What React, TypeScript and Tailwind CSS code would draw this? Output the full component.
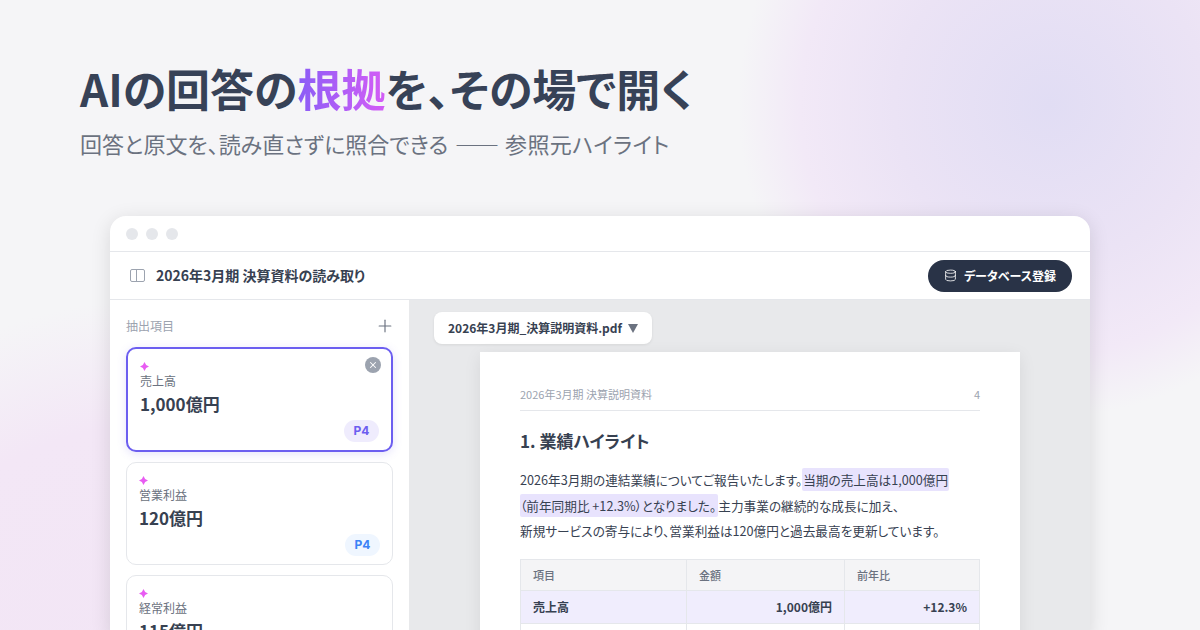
import React from 'react';
import { Database, Plus, X } from 'lucide-react';

const FONT = "font-['Noto_Sans_CJK_JP','Noto_Sans',sans-serif] [font-feature-settings:'palt']";

const Sparkle = () => (
  <svg width="9" height="9" viewBox="0 0 10 10" className="block">
    <path d="M5 0 L6.8 3.2 L10 5 L6.8 6.8 L5 10 L3.2 6.8 L0 5 L3.2 3.2 Z" fill="#e85cf2" />
  </svg>
);

interface ItemCardProps {
  label: string;
  value: string;
  active?: boolean;
}

const ItemCard: React.FC<ItemCardProps> = ({ label, value, active }) => (
  <div
    className={
      active
        ? 'relative h-[105px] shrink-0 rounded-[10px] border-2 border-[#6c5ef0] bg-white pl-[12px] pr-[12px] pt-[13px] shadow-[0_2px_10px_rgba(109,92,232,0.18)]'
        : 'relative h-[103px] shrink-0 rounded-[10px] border border-[#e5e7eb] bg-white pl-[12px] pr-[12px] pt-[13px]'
    }
  >
    <Sparkle />
    <div className="mt-[1px] text-[12px] leading-[18px] text-[#6b7280]">{label}</div>
    <div className="mt-[1px] text-[17px] font-bold leading-[26px] text-[#374151]">{value}</div>
    {active && (
      <div className="absolute right-[10px] top-[8px] flex h-4 w-4 items-center justify-center rounded-full bg-[#9ca3af]">
        <X size={10} strokeWidth={2.5} className="text-white" />
      </div>
    )}
    <div
      className={
        active
          ? "absolute bottom-[8px] right-[12px] flex h-[22px] w-[35px] items-center justify-center rounded-full bg-[#efecfd] font-['Inter',sans-serif] text-[12px] font-bold text-[#6c5ef0]"
          : "absolute bottom-[8px] right-[12px] flex h-[22px] w-[35px] items-center justify-center rounded-full bg-[#eff6ff] font-['Inter',sans-serif] text-[12px] font-bold text-[#3b82f6]"
      }
    >
      P4
    </div>
  </div>
);

const Sidebar = () => (
  <div className="flex w-[299px] shrink-0 flex-col bg-white px-4 pt-[16px]">
    <div className="mb-[11px] flex h-[20px] items-center justify-between">
      <span className="text-[12px] text-[#9ca3af]">抽出項目</span>
      <Plus size={20} strokeWidth={1.4} className="-mr-[2px] text-[#6b7280]" />
    </div>
    <div className="flex flex-col gap-[10px]">
      <ItemCard label="売上高" value="1,000億円" active />
      <ItemCard label="営業利益" value="120億円" />
      <ItemCard label="経常利益" value="115億円" />
    </div>
  </div>
);

const Cell = ({ className, children }: { className: string; children?: React.ReactNode }) => (
  <div className={`border-[#e5e7eb] px-3 ${className}`}>{children}</div>
);

const PdfPage = () => (
  <div className="ml-[71px] w-[540px] bg-white px-10 pt-[33px] shadow-[0_4px_16px_rgba(0,0,0,0.08)]">
    <div className="flex items-center justify-between border-b border-[#e5e7eb] pb-[7px] text-[11px] leading-[18px] text-[#9ca3af]">
      <span>2026年3月期 決算説明資料</span>
      <span>4</span>
    </div>
    <h2 className="mt-[16px] text-[17px] font-bold leading-[28px] text-[#374151]">1. 業績ハイライト</h2>
    <div className="mt-[12px] text-[12.65px] leading-[25.5px] text-[#374151]">
      <div>
        2026年3月期の連結業績についてご報告いたします。
        <span className="rounded-[2px] bg-[#e8e3fd] px-[1px] py-[2px]">当期の売上高は1,000億円</span>
      </div>
      <div>
        <span className="rounded-[2px] bg-[#e8e3fd] py-[2px] pr-[2px]">（前年同期比 +12.3%）となりました。</span>
        主力事業の継続的な成長に加え、
      </div>
      <div>新規サービスの寄与により、営業利益は120億円と過去最高を更新しています。</div>
    </div>
    <div className="mt-[15px] grid grid-cols-[166px_158px_135px] border-l border-t border-[#e5e7eb] text-[11px]">
      <Cell className="border-b border-r bg-[#f4f4f6] font-medium leading-[30px] text-[#6b7280]">項目</Cell>
      <Cell className="border-b border-r bg-[#f4f4f6] font-medium leading-[30px] text-[#6b7280]">金額</Cell>
      <Cell className="border-b border-r bg-[#f4f4f6] font-medium leading-[30px] text-[#6b7280]">前年比</Cell>
      <Cell className="border-b border-r bg-[#f0edfd] text-[12px] font-bold leading-[32px] text-[#374151]">売上高</Cell>
      <Cell className="border-b border-r bg-[#f0edfd] text-right text-[12px] font-bold leading-[32px] text-[#374151]">1,000億円</Cell>
      <Cell className="border-b border-r bg-[#f0edfd] text-right text-[12px] font-bold leading-[32px] text-[#374151]">+12.3%</Cell>
      <Cell className="h-8 border-b border-r" />
      <Cell className="h-8 border-b border-r" />
      <Cell className="h-8 border-b border-r" />
    </div>
  </div>
);

const Viewer = () => (
  <div className="min-w-0 flex-1 overflow-hidden bg-[#e8e9eb] pt-[12px]">
    <div className="ml-[25px] flex h-8 w-[218px] items-center justify-center gap-[6px] rounded-lg bg-white text-[12px] font-bold text-[#374151] shadow-[0_1px_3px_rgba(0,0,0,0.08)]">
      <span>2026年3月期_決算説明資料.pdf</span>
      <svg width="10" height="9" viewBox="0 0 10 9"><path d="M0 0 H10 L5 9 Z" fill="#6b7280" /></svg>
    </div>
    <div className="mt-2">
      <PdfPage />
    </div>
  </div>
);

export default function App() {
  return (
    <div
      className={`${FONT} flex h-[630px] w-[1200px] flex-col overflow-hidden bg-[#f5f5f7] bg-[radial-gradient(circle_312px_at_1050px_105px,#e1ddf4_0%,#ebe3f5_50%,#f2e9f7_80%,rgba(245,245,247,0)_100%),radial-gradient(circle_420px_at_150px_720px,#f2e5f5_0%,#f3e7f6_70%,rgba(245,245,247,0)_100%)]`}
    >
      <div className="pl-20 pt-[55px]">
        <h1 className="text-[44px] font-bold leading-[66px] text-[#374257]">
          AIの回答の
          <span className="bg-gradient-to-r from-[#8b5cf6] to-[#d45cf6] bg-clip-text text-transparent">根拠</span>
          を、その場で開く
        </h1>
        <p className="mt-[6px] text-[22px] leading-[32px] text-[#6b7280]">
          回答と原文を、読み直さずに照合できる <span className="ml-[2px] tracking-[1px]">――</span> <span className="tracking-[0.4px]">参照元ハイライト</span>
        </p>
      </div>
      <div className="ml-[110px] mt-[57px] flex h-[420px] w-[980px] shrink-0 flex-col overflow-hidden rounded-t-2xl bg-white shadow-[0_4px_20px_rgba(0,0,0,0.12)]">
        <div className="flex h-9 shrink-0 items-center gap-2 border-b border-[#e5e7eb] pl-4">
          <span className="h-3 w-3 rounded-full bg-[#e5e7eb]" />
          <span className="h-3 w-3 rounded-full bg-[#e5e7eb]" />
          <span className="h-3 w-3 rounded-full bg-[#e5e7eb]" />
        </div>
        <div className="flex h-12 shrink-0 items-center justify-between border-b border-[#e5e7eb] pl-5 pr-[18px]">
          <div className="flex items-center gap-[11px]">
            <svg width="15" height="13" viewBox="0 0 15 13" fill="none" stroke="#9ca3af" strokeWidth="1">
              <rect x="0.5" y="0.5" width="14" height="12" rx="1.5" />
              <line x1="6.5" y1="0.5" x2="6.5" y2="12.5" />
            </svg>
            <span className="text-[14px] font-bold text-[#374151]">2026年3月期 決算資料の読み取り</span>
          </div>
          <div className="flex h-8 w-[144px] items-center justify-center gap-[7px] rounded-full bg-[#293347] text-[12px] font-bold text-white">
            <Database size={13} strokeWidth={1.5} />
            データベース登録
          </div>
        </div>
        <div className="flex min-h-0 flex-1">
          <Sidebar />
          <Viewer />
        </div>
      </div>
    </div>
  );
}
